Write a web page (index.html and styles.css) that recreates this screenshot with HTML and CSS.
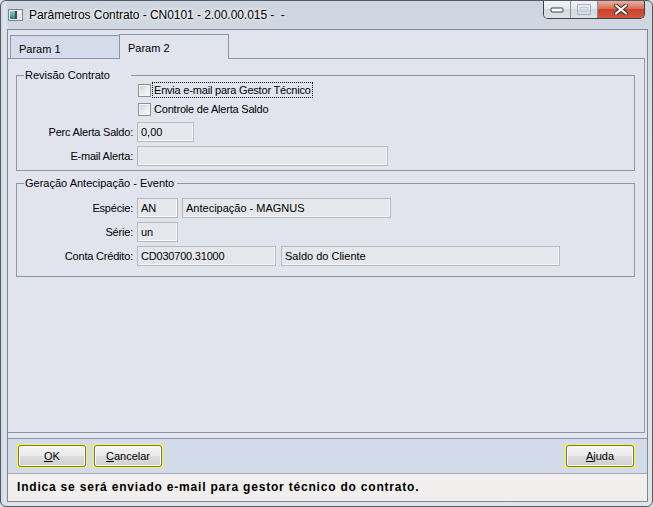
FILE: index.html
```html
<!DOCTYPE html>
<html lang="pt-BR">
<head>
  <meta charset="UTF-8">
  <title>Parâmetros Contrato</title>
  <link rel="stylesheet" href="styles.css">
</head>
<body>
  <div class="window">
    <div class="titlebar">
      <svg class="app-icon" width="15" height="12" viewBox="0 0 15 12">
        <defs>
          <linearGradient id="ico" x1="0" y1="0" x2="0" y2="1">
            <stop offset="0" stop-color="#8fcfc0"/>
            <stop offset="1" stop-color="#2b7f86"/>
          </linearGradient>
        </defs>
        <rect x="0.5" y="0.5" width="14" height="11" fill="#e4e8ec" stroke="#7d858e"/>
        <rect x="2" y="2" width="5" height="8" fill="url(#ico)"/>
        <rect x="7" y="2" width="2" height="8" fill="#3b4a55"/>
        <rect x="10" y="2" width="3" height="2" fill="#fff"/>
      </svg>
      <span class="title">Parâmetros Contrato - CN0101 - 2.00.00.015 -  -</span>
      <div class="caption-buttons">
        <span class="cap-btn cap-min">
          <svg width="14" height="6" viewBox="0 0 14 6"><rect x="1" y="1" width="12" height="4" rx="1" fill="#fff" stroke="#3a3f46"/></svg>
        </span>
        <span class="cap-btn cap-max">
          <svg width="14" height="11" viewBox="0 0 14 11"><rect x="0.5" y="0.5" width="13" height="10" fill="none" stroke="#a9b0b9"/><rect x="3.5" y="3.5" width="7" height="4" fill="none" stroke="#c3c9d0"/></svg>
        </span>
        <span class="cap-btn cap-close">
          <svg width="14" height="11" viewBox="0 0 14 11">
            <path d="M2 1.5 L12 9.5 M12 1.5 L2 9.5" stroke="#3b2a28" stroke-width="4" stroke-linecap="square"/>
            <path d="M2 1.5 L12 9.5 M12 1.5 L2 9.5" stroke="#fff" stroke-width="2" stroke-linecap="square"/>
          </svg>
        </span>
      </div>
    </div>

    <div class="client">
      <div class="tabs">
        <div class="tab">Param 1</div>
        <div class="tab active">Param 2</div>
      </div>

      <div class="tab-panel">
        <fieldset class="group">
          <legend class="legend-wide">Revisão Contrato</legend>
          <div class="row check-row">
            <span class="label"></span>
            <span class="check"><span class="box"></span><span class="check-text focused">Envia e-mail para Gestor Técnico</span></span>
          </div>
          <div class="row check-row second">
            <span class="label"></span>
            <span class="check"><span class="box"></span><span class="check-text">Controle de Alerta Saldo</span></span>
          </div>
          <div class="row field-row first">
            <span class="label">Perc Alerta Saldo:</span>
            <span class="field w-perc">0,00</span>
          </div>
          <div class="row field-row">
            <span class="label">E-mail Alerta:</span>
            <span class="field w-email"></span>
          </div>
        </fieldset>

        <fieldset class="group group-event">
          <legend>Geração Antecipação - Evento</legend>
          <div class="row field-row first">
            <span class="label">Espécie:</span>
            <span class="field w-code">AN</span>
            <span class="field w-desc">Antecipação - MAGNUS</span>
          </div>
          <div class="row field-row">
            <span class="label">Série:</span>
            <span class="field w-code">un</span>
          </div>
          <div class="row field-row">
            <span class="label">Conta Crédito:</span>
            <span class="field w-account">CD030700.31000</span>
            <span class="field w-account-desc">Saldo do Cliente</span>
          </div>
        </fieldset>
      </div>

      <div class="button-bar">
        <span class="btn-frame"><button class="btn"><u>O</u>K</button></span>
        <span class="btn-frame"><button class="btn"><u>C</u>ancelar</button></span>
        <span class="btn-frame push-right"><button class="btn"><u>A</u>juda</button></span>
      </div>

      <div class="status-bar">Indica se será enviado e-mail para gestor técnico do contrato.</div>
    </div>
  </div>
</body>
</html>
```

FILE: styles.css
```css
* {
  box-sizing: border-box;
}

body {
  margin: 0;
  font-family: "Liberation Sans", Arial, sans-serif;
  font-size: 11px;
  color: #000;
  background: #d9dfe7;
}

/* window frame */
.window {
  width: 653px;
  height: 507px;
  display: flex;
  flex-direction: column;
  border: 1px solid #555b62;
  border-radius: 6px;
  overflow: hidden;
  background:
    linear-gradient(to right, #c9d3df 0, #dfe5ec 3px, #d6dde6 6px, transparent 7px),
    linear-gradient(180deg, #cdd5de 0, #dde3ea 35%, #e2e6eb 100%);
}

.titlebar {
  height: 28px;
  display: flex;
  align-items: flex-start;
  padding-left: 7px;
}

.app-icon {
  margin-top: 8px;
  margin-right: 6px;
  flex-shrink: 0;
}

.title {
  font-size: 12px;
  line-height: 28px;
  white-space: pre;
  letter-spacing: -0.05px;
  text-shadow: 0 0 6px #fff, 0 0 3px #fff;
}

.caption-buttons {
  margin-left: auto;
  margin-right: 7px;
  display: flex;
  height: 18px;
  border: 1px solid #3f444b;
  border-top: none;
  border-radius: 0 0 5px 5px;
  overflow: hidden;
}

.cap-btn {
  display: flex;
  align-items: center;
  justify-content: center;
  height: 100%;
}

.cap-min,
.cap-max {
  width: 27px;
  border-right: 1px solid #8a9099;
  background: linear-gradient(180deg, #f2f4f7 0, #e4e8ed 45%, #d3d9e1 50%, #dde2e8 100%);
}

.cap-close {
  width: 46px;
  background: linear-gradient(180deg, #eab0a2 0, #d96e58 45%, #c8432a 50%, #d4573d 100%);
}

/* client area */
.client {
  flex: 1;
  display: flex;
  flex-direction: column;
  margin: 0 4px 4px 6px;
  border: 1px solid #7f8893;
  background: #e1e4ed;
}

.tabs {
  height: 28px;
  display: flex;
  align-items: flex-end;
  padding-left: 2px;
}

.tab {
  width: 110px;
  height: 23px;
  padding: 7px 0 0 8px;
  border: 1px solid #8d96a6;
  border-bottom: none;
  background: #d4dcec;
}

.tab.active {
  position: relative;
  height: 25px;
  margin-left: -1px;
  margin-bottom: -1px;
  background: #e1e4ed;
}

.tab-panel {
  flex: 1;
  margin: 0 2px 5px 0;
  padding: 10px 9px 0 8px;
  border: 1px solid #8d96a6;
  border-left: none;
}

/* group boxes */
.group {
  margin: 0;
  padding: 0 0 4px 0;
  border: 1px solid #8f97a3;
  min-width: 0;
}

.group legend {
  margin-left: 7px;
  padding: 0 3px 0 1px;
  line-height: 13px;
}

.group legend.legend-wide {
  padding-right: 21px;
}

.group-event {
  margin-top: 6px;
  padding-bottom: 10px;
}

.row {
  display: flex;
  align-items: center;
}

.label {
  width: 116px;
  margin-right: 4px;
  text-align: right;
  letter-spacing: -0.2px;
  flex-shrink: 0;
}

.check-row {
  height: 16px;
}

.check-row.second {
  margin-top: 3px;
}

.check {
  display: flex;
  align-items: center;
  margin-left: 1px;
}

.box {
  width: 13px;
  height: 13px;
  margin-right: 1px;
  border: 1px solid #8e8f8f;
  background: linear-gradient(135deg, #cdd1d6 0, #eceef0 60%, #f7f7f7 100%);
  box-shadow: inset 0 0 0 1px #f4f4f4;
}

.check-text {
  height: 16px;
  line-height: 14px;
  padding: 0 1px;
  letter-spacing: -0.2px;
  border: 1px solid transparent;
}

.check-text.focused {
  border: 1px dotted #000;
}

.field-row {
  margin-top: 4px;
}

.field-row.first {
  margin-top: 5px;
}

.group-event .field-row.first {
  margin-top: 8px;
}

.field {
  height: 20px;
  line-height: 18px;
  padding: 0 3px;
  border: 1px solid #b7bac0;
  box-shadow: inset -1px -1px 0 #f7f8fa;
  background: #e5e7ec;
  white-space: nowrap;
  overflow: hidden;
}

.field + .field {
  margin-left: 4px;
}

.w-perc { width: 57px; }
.w-email { width: 251px; }
.w-code { width: 41px; }
.w-desc { width: 209px; }
.w-account { width: 139px; letter-spacing: -0.2px; }
.w-account + .w-account-desc { width: 279px; margin-left: 5px; }

/* buttons */
.button-bar {
  height: 35px;
  display: flex;
  align-items: center;
  gap: 6px;
  padding: 0 12px 0 9px;
  border-top: 1px solid #8d96a6;
  background: #d3dbeb;
}

.btn-frame {
  display: block;
  border: 1px solid #ffff00;
}

.push-right {
  margin-left: auto;
}

.btn {
  display: block;
  width: 68px;
  height: 22px;
  margin: 0;
  padding: 0;
  font-family: inherit;
  font-size: 11px;
  color: #000;
  border: 1px solid #707070;
  border-radius: 3px;
  background: linear-gradient(180deg, #f3f3f3 0, #ebebeb 48%, #dddddd 52%, #cfcfcf 100%);
  box-shadow: inset 0 0 0 1px #fbfbfb;
}

/* help line */
.status-bar {
  height: 28px;
  padding-left: 9px;
  line-height: 27px;
  font-size: 12px;
  font-weight: bold;
  letter-spacing: 0.8px;
  border-top: 1px solid #a3aab4;
  background: #f0efee;
}
```
